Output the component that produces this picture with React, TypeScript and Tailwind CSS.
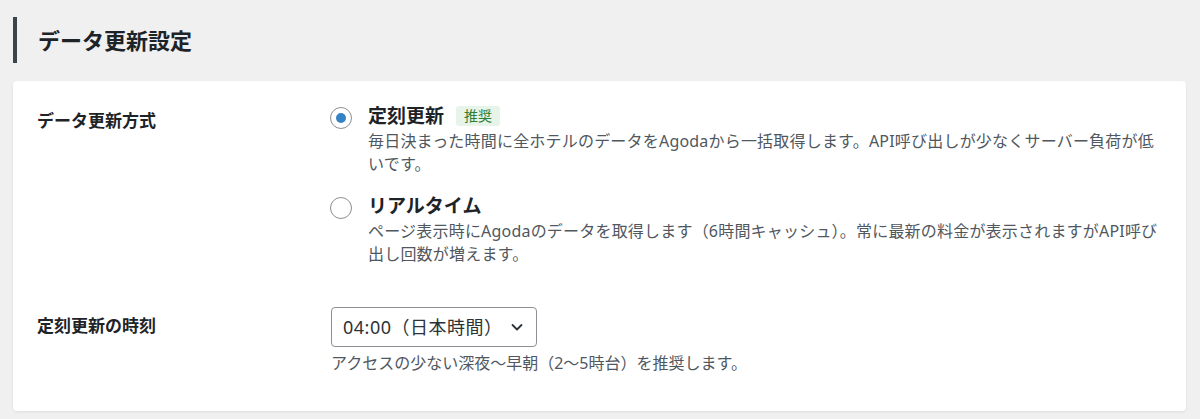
import React from "react";

const font = { fontFamily: '"Noto Sans", "Noto Sans CJK JP", sans-serif' };

function Radio({ checked }: { checked?: boolean }) {
  return (
    <span className="mt-[4px] flex h-[22px] w-[22px] shrink-0 items-center justify-center rounded-full border border-[#8c8f94] bg-white">
      {checked && <span className="h-[10px] w-[10px] rounded-full bg-[#3582c4]" />}
    </span>
  );
}

export default function App() {
  return (
    <div
      className="h-[419px] w-[1200px] overflow-hidden bg-[#f0f0f1] pl-[13px] pr-[14px] pt-[17px] text-[#1d2327]"
      style={font}
    >
      <h2 className="flex h-[46px] items-center border-l-4 border-[#3c434a] pl-[21px] text-[22px] font-bold leading-none">
        データ更新設定
      </h2>

      <div className="mt-[18px] h-[330px] rounded-[4px] bg-white pl-[24px] pr-[21px] pt-[22px] shadow-[0_1px_3px_rgba(0,0,0,0.08)]">
        <div className="grid grid-cols-[293px_1fr]">
          <div className="pt-[5px] text-[17px] font-bold leading-[26px]">データ更新方式</div>
          <div className="flex flex-col gap-[17px]">
            <div className="flex items-start gap-[16px]">
              <Radio checked />
              <div>
                <div className="flex items-center gap-[12px]">
                  <span className="text-[19px] font-bold leading-[26px]">定刻更新</span>
                  <span className="rounded-[3px] bg-[#e6f4ea] px-[8px] text-[14px] leading-[20px] text-[#2e7d32]">
                    推奨
                  </span>
                </div>
                <p className="mt-[1px] text-[16px] leading-[23px] tracking-[0.2px] text-[#50575e]">
                  毎日決まった時間に全ホテルのデータをAgodaから一括取得します。API呼び出しが少なくサーバー負荷が低
                  <br />
                  いです。
                </p>
              </div>
            </div>
            <div className="flex items-start gap-[16px]">
              <Radio />
              <div>
                <div className="text-[19px] font-bold leading-[26px]">リアルタイム</div>
                <p className="mt-[1px] text-[16px] leading-[23px] tracking-[0.2px] text-[#50575e]">
                  ページ表示時にAgodaのデータを取得します（6時間キャッシュ）。常に最新の料金が表示されますがAPI呼び
                  <br />
                  出し回数が増えます。
                </p>
              </div>
            </div>
          </div>

          <div className="mt-[41px] pt-[6px] text-[17px] font-bold leading-[26px]">定刻更新の時刻</div>
          <div className="mt-[41px] pl-px">
            <div className="flex h-[40px] w-[206px] items-center justify-between rounded-[4px] border border-[#8c8f94] bg-white pl-[11px] pr-[12px] text-[18px] tracking-[0.5px] text-[#2c3338]">
              <span>04:00（日本時間）</span>
              <svg width="14" height="14" viewBox="0 0 14 14" fill="none">
                <path d="M2.5 5l4.5 4.5L11.5 5" stroke="#2c3338" strokeWidth="1.8" strokeLinecap="round" strokeLinejoin="round" />
              </svg>
            </div>
            <p className="mt-[5px] text-[16px] leading-[23px] text-[#50575e]">
              アクセスの少ない深夜〜早朝（2〜5時台）を推奨します。
            </p>
          </div>
        </div>
      </div>
    </div>
  );
}
